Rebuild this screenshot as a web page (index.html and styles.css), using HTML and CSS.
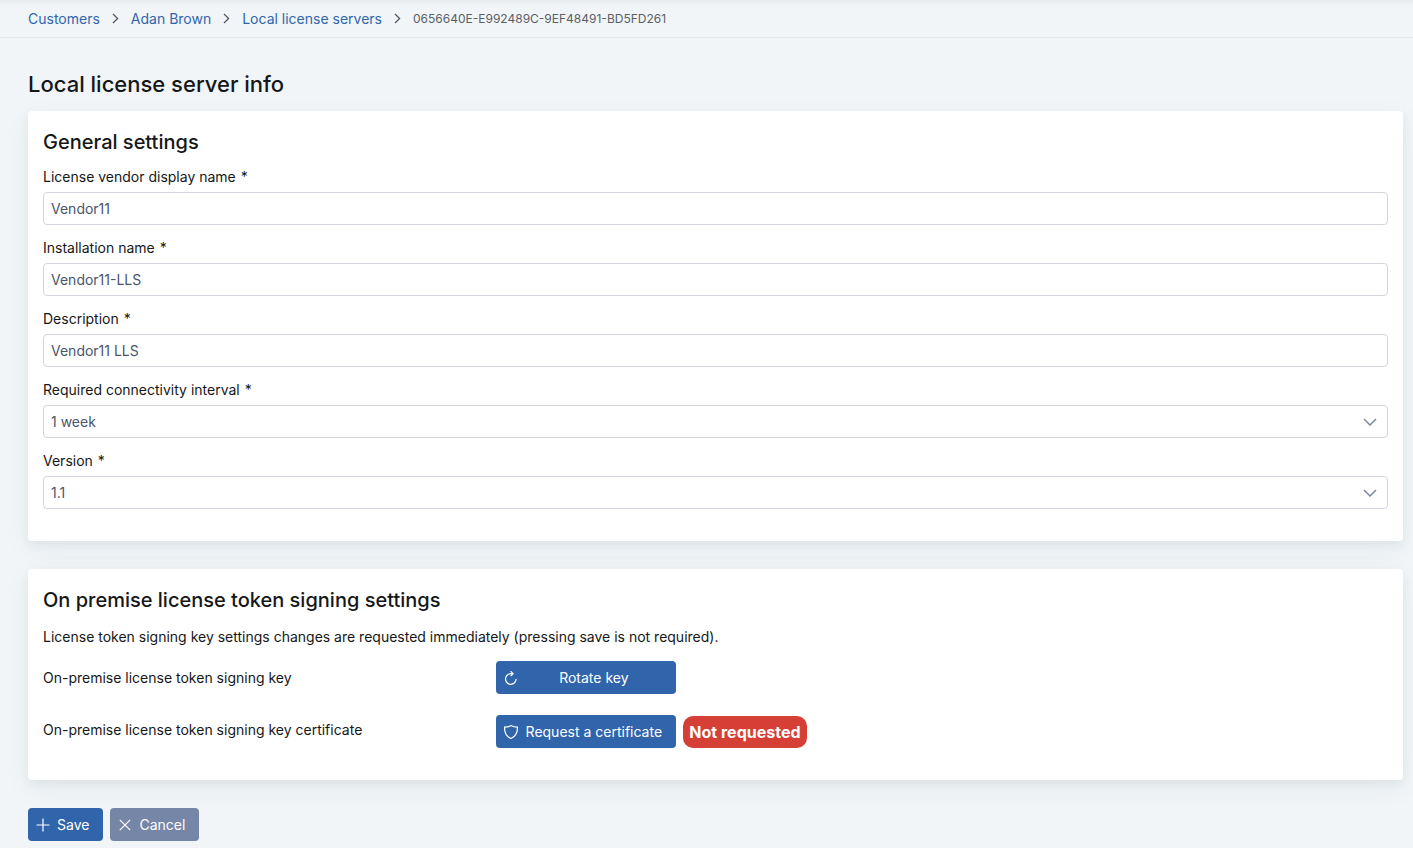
FILE: index.html
```html
<!DOCTYPE html>
<html lang="en">
<head>
<meta charset="utf-8">
<meta name="viewport" content="width=device-width, initial-scale=1">
<title>Local license server info</title>
<link rel="stylesheet" href="styles.css">
</head>
<body>
<nav class="breadcrumb" aria-label="Breadcrumb">
  <a href="#">Customers</a>
  <svg class="separator" viewBox="0 0 7 11" aria-hidden="true"><path d="M1 1l4.600 4.500L1 10"/></svg>
  <a href="#">Adan Brown</a>
  <svg class="separator" viewBox="0 0 7 11" aria-hidden="true"><path d="M1 1l4.600 4.500L1 10"/></svg>
  <a href="#">Local license servers</a>
  <svg class="separator" viewBox="0 0 7 11" aria-hidden="true"><path d="M1 1l4.600 4.500L1 10"/></svg>
  <span class="current">0656640E-E992489C-9EF48491-BD5FD261</span>
</nav>
<main class="page">
  <h1 class="page-title">Local license server info</h1>
  <form class="form">
    <section class="card">
      <h2 class="card-title">General settings</h2>
      <div class="fields">
        <div class="field">
          <label for="vendor">License vendor display name <span class="required">*</span></label>
          <input class="control" id="vendor" type="text" value="Vendor11">
        </div>
        <div class="field">
          <label for="installation">Installation name <span class="required">*</span></label>
          <input class="control" id="installation" type="text" value="Vendor11-LLS">
        </div>
        <div class="field">
          <label for="description">Description <span class="required">*</span></label>
          <input class="control" id="description" type="text" value="Vendor11 LLS">
        </div>
        <div class="field">
          <label for="interval">Required connectivity interval <span class="required">*</span></label>
          <div class="select">
            <select class="control" id="interval"><option>1 week</option></select>
            <svg class="chevron" viewBox="0 0 14 8" aria-hidden="true"><path d="M1 1l6 6 6-6"/></svg>
          </div>
        </div>
        <div class="field">
          <label for="version">Version <span class="required">*</span></label>
          <div class="select">
            <select class="control" id="version"><option>1.1</option></select>
            <svg class="chevron" viewBox="0 0 14 8" aria-hidden="true"><path d="M1 1l6 6 6-6"/></svg>
          </div>
        </div>
      </div>
    </section>
    <section class="card">
      <h2 class="card-title">On premise license token signing settings</h2>
      <p class="note">License token signing key settings changes are requested immediately (pressing save is not required).</p>
      <div class="setting">
        <span>On-premise license token signing key</span>
        <div class="actions">
          <button class="button wide" type="button">
            <svg class="icon" viewBox="0 0 14 14" aria-hidden="true"><path d="M8.500 2.700H6.800A5.300 5.300 0 1 0 12.100 8M6.600.2l2.500 2.500-2.500 2.500"/></svg>
            <span class="button-label">Rotate key</span>
          </button>
        </div>
      </div>
      <div class="setting certificate">
        <span>On-premise license token signing key certificate</span>
        <div class="actions">
          <button class="button wide" type="button">
            <svg class="icon" viewBox="0 0 14 14" aria-hidden="true"><path d="M7 .6C5.200 1.700 3.100 2.200.6 2.200.3 7.500 2.600 11.500 7 13.500c4.400-2 6.700-6 6.400-11.300C10.900 2.200 8.800 1.700 7 .6z"/></svg>
            <span class="button-label">Request a certificate</span>
          </button>
          <span class="badge">Not requested</span>
        </div>
      </div>
    </section>
    <div class="footer">
      <button class="button" type="submit">
        <svg class="icon" viewBox="0 0 14 14" aria-hidden="true"><path d="M7 .5v13M.5 7h13"/></svg>
        <span class="button-label">Save</span>
      </button>
      <button class="button secondary" type="button">
        <svg class="icon" viewBox="0 0 14 14" aria-hidden="true"><path d="M1.800 1.800l10.400 10.400M12.200 1.800L1.800 12.200"/></svg>
        <span class="button-label">Cancel</span>
      </button>
    </div>
  </form>
</main>
</body>
</html>
```

FILE: styles.css
```css
* {
  box-sizing: border-box;
}

body {
  margin: 0;
  background: #f1f5f8;
  color: #161718;
  font: 14px/17px Inter, "Liberation Sans", sans-serif;
}

.breadcrumb {
  display: flex;
  align-items: center;
  gap: 12px;
  padding: 10px 28px;
  border-bottom: 1px solid #e4e8ec;
  background: linear-gradient(#e7ebef, #f1f5f8 6px);
}

.breadcrumb a {
  color: #3065ac;
  text-decoration: none;
}

.separator {
  width: 7px;
  height: 11px;
  fill: none;
  stroke: #555a60;
  stroke-width: 1.3;
}

.current {
  color: #5b5f64;
  font-size: 12px;
}

.page {
  padding: 32px 10px 7px 28px;
}

.page-title {
  margin: 0 0 13px;
  font-size: 22px;
  font-weight: 500;
  line-height: 28px;
}

.form {
  display: flex;
  flex-direction: column;
  gap: 28px;
}

.card {
  padding: 15px 15px 32px;
  border-radius: 4px;
  background: #fff;
  box-shadow: 0 4px 10px rgba(40, 55, 65, 0.06), 0 8px 30px rgba(40, 55, 65, 0.05);
}

.card-title {
  margin: 0 0 10px;
  font-size: 20px;
  font-weight: 500;
  line-height: 32px;
}

.fields {
  display: grid;
  gap: 14px;
}

.field {
  display: grid;
  gap: 7px;
}

.required {
  margin-left: 1px;
}

.control {
  width: 100%;
  height: 33px;
  padding: 0 7px;
  border: 1px solid #d1d5df;
  border-radius: 4px;
  background: #fff;
  color: #4b556c;
  font: inherit;
  appearance: none;
}

.select {
  display: grid;
  align-items: center;
}

.select > * {
  grid-area: 1 / 1;
}

.chevron {
  justify-self: end;
  width: 14px;
  height: 8px;
  margin-right: 11px;
  fill: none;
  stroke: #7b88a4;
  stroke-width: 1.5;
  pointer-events: none;
}

.note {
  margin: 12px 0 16px;
}

.setting {
  display: grid;
  grid-template-columns: 33.333% 1fr;
  align-items: center;
  column-gap: 5px;
}

.certificate {
  margin-top: 17px;
}

.certificate .actions {
  padding-top: 4px;
}

.actions,
.footer {
  display: flex;
  align-items: center;
  gap: 7px;
}

.button {
  display: flex;
  align-items: center;
  gap: 7px;
  height: 33px;
  padding: 0 14px 0 8px;
  border: 0;
  border-radius: 4px;
  background: #3065ac;
  color: #fff;
  font: inherit;
  white-space: nowrap;
}

.wide {
  width: 180px;
}

.button-label {
  flex: 1;
  text-align: center;
}

.secondary {
  background: #7686a6;
}

.icon {
  flex: none;
  width: 14px;
  height: 14px;
  fill: none;
  stroke: currentColor;
  stroke-width: 1.2;
}

.badge {
  padding: 6px;
  border-radius: 10px;
  background: #d63f35;
  color: #fff;
  font-size: 16px;
  font-weight: 700;
  line-height: 20px;
}
```
